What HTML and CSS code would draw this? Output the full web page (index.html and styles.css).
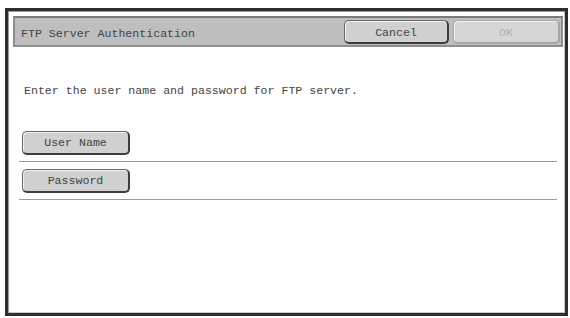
FILE: index.html
```html
<!DOCTYPE html>
<html>
<head>
<meta charset="utf-8">
<link rel="stylesheet" href="styles.css">
</head>
<body>
<div class="frame">
  <div class="titlebar">
    <div class="title">FTP Server Authentication</div>
    <div class="btn cancel">Cancel</div>
    <div class="btn ok">OK</div>
  </div>
  <div class="content">
    <p class="msg">Enter the user name and password for FTP server.</p>
    <div class="rows">
      <div class="row"><div class="key">User Name</div></div>
      <div class="row"><div class="key">Password</div></div>
    </div>
  </div>
</div>
</body>
</html>
```
FILE: styles.css
```css
html, body {
  margin: 0;
  padding: 0;
  background: #fff;
}
body {
  font-family: "Liberation Mono", "Courier New", monospace;
  font-size: 11.6px;
  color: #444;
}
.frame {
  box-sizing: border-box;
  margin: 8px 2px 0 5px;
  height: 308px;
  border: 3px solid #2e2e2e;
  box-shadow: inset 1px 1px 0 #9a9a9a, inset -1px -1px 0 #c8c8c8;
  padding: 5px 2px 0 5px;
}
.titlebar {
  display: flex;
  align-items: center;
  height: 31px;
  box-sizing: border-box;
  background: #bebebe;
  border: 2px solid #8e8e8e;
  border-top-color: #7a7a7a;
  padding: 1px 1px 0 6px;
}
.title {
  flex: 1;
  padding-top: 3px;
}
.btn {
  box-sizing: border-box;
  height: 24px;
  line-height: 23px;
  text-align: center;
  border-radius: 5px;
}
.cancel {
  width: 105px;
  background: #d0d0d0;
  border: 1px solid #6a6a6a;
  border-right: 2px solid #3c3c3c;
  border-bottom: 2px solid #3c3c3c;
  box-shadow: inset 1px 1px 0 #f0f0f0;
  margin-right: 4px;
}
.ok {
  width: 107px;
  background: #d6d6d6;
  border: 1px solid #acacac;
  border-right: 2px solid #a6a6a6;
  border-bottom: 2px solid #a6a6a6;
  box-shadow: inset 1px 1px 0 #f0f0f0;
  color: #b0b0b0;
}
.content {
  padding: 0 6px 0 6px;
}
.msg {
  margin: 37px 0 0 5px;
  height: 14px;
  line-height: 14px;
}
.rows {
  margin-top: 26px;
}
.row {
  border-bottom: 1px solid #9c9c9c;
  padding: 7px 0 6px 3px;
}
.key {
  box-sizing: border-box;
  width: 108px;
  height: 24px;
  line-height: 22px;
  text-align: center;
  background: #d0d0d0;
  border: 1px solid #6a6a6a;
  border-right: 2px solid #3c3c3c;
  border-bottom: 2px solid #3c3c3c;
  border-radius: 5px;
  box-shadow: inset 1px 1px 0 #f0f0f0;
}
```
